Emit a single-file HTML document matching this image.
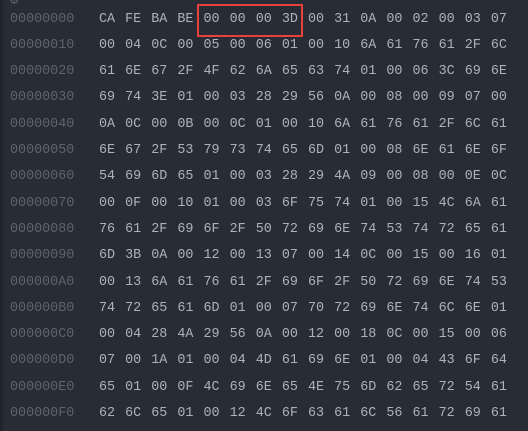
<!DOCTYPE html><html><head><style>
html,body{margin:0;padding:0;width:528px;height:431px;overflow:hidden;background:#282c34;}
body{position:relative;font-family:"Liberation Mono",monospace;font-size:13.4px;}
.l{position:absolute;left:0;top:0;width:3px;height:431px;background:#21252b;}
.r{position:absolute;left:0;height:26.3px;line-height:26.3px;white-space:nowrap;}
.o{position:absolute;left:10px;color:#5c6370;}
.b{position:absolute;left:99px;color:#abb2bf;}
.b span{display:inline-block;width:26.13px;}
.box{position:absolute;left:197px;top:4px;width:102px;height:29px;border:2px solid #e8403a;}
</style></head><body>
<div class="l"></div>
<div id="c"></div>
<div style="position:absolute;left:10px;top:-8px;color:#5c6370;font-size:14px">⚙</div>
<div class="r" style="top:6.5px"><span class="o">00000000</span><span class="b"><span>CA</span><span>FE</span><span>BA</span><span>BE</span><span>00</span><span>00</span><span>00</span><span>3D</span><span>00</span><span>31</span><span>0A</span><span>00</span><span>02</span><span>00</span><span>03</span><span>07</span></span></div>
<div class="r" style="top:32.8px"><span class="o">00000010</span><span class="b"><span>00</span><span>04</span><span>0C</span><span>00</span><span>05</span><span>00</span><span>06</span><span>01</span><span>00</span><span>10</span><span>6A</span><span>61</span><span>76</span><span>61</span><span>2F</span><span>6C</span></span></div>
<div class="r" style="top:59.1px"><span class="o">00000020</span><span class="b"><span>61</span><span>6E</span><span>67</span><span>2F</span><span>4F</span><span>62</span><span>6A</span><span>65</span><span>63</span><span>74</span><span>01</span><span>00</span><span>06</span><span>3C</span><span>69</span><span>6E</span></span></div>
<div class="r" style="top:85.4px"><span class="o">00000030</span><span class="b"><span>69</span><span>74</span><span>3E</span><span>01</span><span>00</span><span>03</span><span>28</span><span>29</span><span>56</span><span>0A</span><span>00</span><span>08</span><span>00</span><span>09</span><span>07</span><span>00</span></span></div>
<div class="r" style="top:111.7px"><span class="o">00000040</span><span class="b"><span>0A</span><span>0C</span><span>00</span><span>0B</span><span>00</span><span>0C</span><span>01</span><span>00</span><span>10</span><span>6A</span><span>61</span><span>76</span><span>61</span><span>2F</span><span>6C</span><span>61</span></span></div>
<div class="r" style="top:138px"><span class="o">00000050</span><span class="b"><span>6E</span><span>67</span><span>2F</span><span>53</span><span>79</span><span>73</span><span>74</span><span>65</span><span>6D</span><span>01</span><span>00</span><span>08</span><span>6E</span><span>61</span><span>6E</span><span>6F</span></span></div>
<div class="r" style="top:164.3px"><span class="o">00000060</span><span class="b"><span>54</span><span>69</span><span>6D</span><span>65</span><span>01</span><span>00</span><span>03</span><span>28</span><span>29</span><span>4A</span><span>09</span><span>00</span><span>08</span><span>00</span><span>0E</span><span>0C</span></span></div>
<div class="r" style="top:190.6px"><span class="o">00000070</span><span class="b"><span>00</span><span>0F</span><span>00</span><span>10</span><span>01</span><span>00</span><span>03</span><span>6F</span><span>75</span><span>74</span><span>01</span><span>00</span><span>15</span><span>4C</span><span>6A</span><span>61</span></span></div>
<div class="r" style="top:216.9px"><span class="o">00000080</span><span class="b"><span>76</span><span>61</span><span>2F</span><span>69</span><span>6F</span><span>2F</span><span>50</span><span>72</span><span>69</span><span>6E</span><span>74</span><span>53</span><span>74</span><span>72</span><span>65</span><span>61</span></span></div>
<div class="r" style="top:243.2px"><span class="o">00000090</span><span class="b"><span>6D</span><span>3B</span><span>0A</span><span>00</span><span>12</span><span>00</span><span>13</span><span>07</span><span>00</span><span>14</span><span>0C</span><span>00</span><span>15</span><span>00</span><span>16</span><span>01</span></span></div>
<div class="r" style="top:269.5px"><span class="o">000000A0</span><span class="b"><span>00</span><span>13</span><span>6A</span><span>61</span><span>76</span><span>61</span><span>2F</span><span>69</span><span>6F</span><span>2F</span><span>50</span><span>72</span><span>69</span><span>6E</span><span>74</span><span>53</span></span></div>
<div class="r" style="top:295.8px"><span class="o">000000B0</span><span class="b"><span>74</span><span>72</span><span>65</span><span>61</span><span>6D</span><span>01</span><span>00</span><span>07</span><span>70</span><span>72</span><span>69</span><span>6E</span><span>74</span><span>6C</span><span>6E</span><span>01</span></span></div>
<div class="r" style="top:322.1px"><span class="o">000000C0</span><span class="b"><span>00</span><span>04</span><span>28</span><span>4A</span><span>29</span><span>56</span><span>0A</span><span>00</span><span>12</span><span>00</span><span>18</span><span>0C</span><span>00</span><span>15</span><span>00</span><span>06</span></span></div>
<div class="r" style="top:348.4px"><span class="o">000000D0</span><span class="b"><span>07</span><span>00</span><span>1A</span><span>01</span><span>00</span><span>04</span><span>4D</span><span>61</span><span>69</span><span>6E</span><span>01</span><span>00</span><span>04</span><span>43</span><span>6F</span><span>64</span></span></div>
<div class="r" style="top:374.7px"><span class="o">000000E0</span><span class="b"><span>65</span><span>01</span><span>00</span><span>0F</span><span>4C</span><span>69</span><span>6E</span><span>65</span><span>4E</span><span>75</span><span>6D</span><span>62</span><span>65</span><span>72</span><span>54</span><span>61</span></span></div>
<div class="r" style="top:401px"><span class="o">000000F0</span><span class="b"><span>62</span><span>6C</span><span>65</span><span>01</span><span>00</span><span>12</span><span>4C</span><span>6F</span><span>63</span><span>61</span><span>6C</span><span>56</span><span>61</span><span>72</span><span>69</span><span>61</span></span></div>
<div class="box"></div>
</body></html>
